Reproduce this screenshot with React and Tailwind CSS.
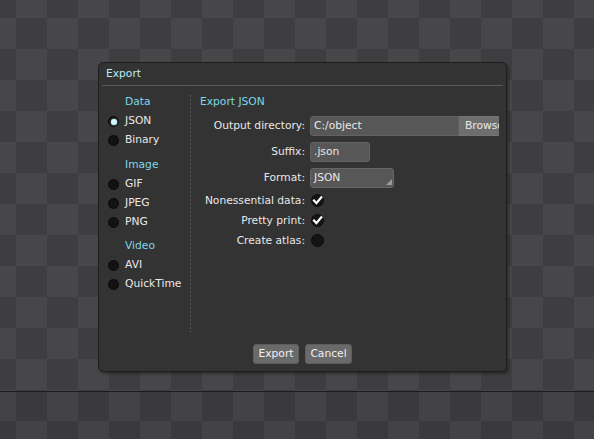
import React from "react";

function Radio({ checked }) {
  return (
    <span className="w-[11px] h-[11px] rounded-full bg-[#121212] border border-[#0a0a0a] flex items-center justify-center shrink-0">
      {checked && <span className="w-[6px] h-[6px] rounded-full bg-[#d2f7fc] shadow-[0_0_2px_#8fe3f3]" />}
    </span>
  );
}

function RadioRow({ label, checked }) {
  return (
    <div className="h-[19px] flex items-center pl-[9px] gap-[6px]">
      <Radio checked={checked} />
      <span className="text-[#e8e8e8]">{label}</span>
    </div>
  );
}

function Header({ children, className = "" }) {
  return (
    <div className={"h-[19.25px] flex items-center text-[#7fd6ea] " + className}>{children}</div>
  );
}

function Check({ checked }) {
  return (
    <span className="w-[13px] h-[13px] rounded-full bg-[#141414] border border-[#0c0c0c] flex items-center justify-center ml-[1px]">
      {checked && (
        <svg width="11" height="11" viewBox="0 0 11 11">
          <path d="M2 5.6 L4.4 8.2 L9.3 2.3" fill="none" stroke="#ffffff" strokeWidth="2.2" strokeLinecap="square" />
        </svg>
      )}
    </span>
  );
}

export default function App() {
  return (
    <div className="w-[594px] h-[439px] overflow-hidden bg-[conic-gradient(#47474a_25%,#3e3e41_0_50%,#47474a_0_75%,#3e3e41_0)] bg-[length:62px_62px] bg-[position:16px_18px] font-['DejaVu_Sans',sans-serif] text-[10.7px] leading-none">
      <div className="h-[391px] pl-[98px] pt-[62px]">
        <div className="w-[409px] h-[310px] bg-[#333333] border border-[#1e1e1e] rounded-[5px] shadow-[2px_2px_3px_rgba(0,0,0,0.35)] flex flex-col">
          <div className="h-[22px] flex items-center pl-[7px] pt-[1px] text-[#b4ecf6]">Export</div>
          <div className="mx-[3px] h-px bg-[#5a5a5a]" />
          <div className="h-[250px] flex">
            <div className="w-[91px] pt-[7px] flex flex-col">
              <Header className="pl-[26px]">Data</Header>
              <RadioRow label="JSON" checked />
              <RadioRow label="Binary" />
              <Header className="pl-[26px] mt-[5px]">Image</Header>
              <RadioRow label="GIF" />
              <RadioRow label="JPEG" />
              <RadioRow label="PNG" />
              <Header className="pl-[26px] mt-[5px]">Video</Header>
              <RadioRow label="AVI" />
              <RadioRow label="QuickTime" />
            </div>
            <div className="w-px mt-[9px] mb-[4px] bg-[repeating-linear-gradient(to_bottom,#5c5c5c_0_2px,transparent_2px_4px)]" />
            <div className="flex-1 pt-[7px] pl-[9px] pr-[7px] flex flex-col">
              <Header>Export JSON</Header>
              <div className="mt-[3.5px] grid grid-cols-[105px_189px] gap-x-[5px] text-[#e8e8e8]">
                <div className="h-[20px] pt-[2px] flex items-center justify-end">Output directory:</div>
                <div className="h-[20px] flex">
                  <div className="w-[149px] h-full bg-[#575757] border border-[#626262] rounded-l-[3px] flex items-center pl-[3px] pt-[2px]">C:/object</div>
                  <div className="w-[40px] h-full bg-[#6e6e6e] border-y border-[#747474] overflow-hidden whitespace-nowrap flex items-center pl-[6px] pt-[2px]">Browse</div>
                </div>
                <div className="h-[20px] pt-[2px] mt-[6px] flex items-center justify-end">Suffix:</div>
                <div className="h-[20px] mt-[6px] flex">
                  <div className="w-[60px] h-full bg-[#575757] border border-[#626262] rounded-[3px] flex items-center pl-[3px] pt-[2px]">.json</div>
                </div>
                <div className="h-[20px] pt-[2px] mt-[6px] flex items-center justify-end">Format:</div>
                <div className="h-[20px] mt-[6px] flex">
                  <div className="relative w-[84px] h-full bg-[#575757] border border-[#666666] rounded-[3px] flex items-center pl-[3px] pt-[2px]">
                    JSON
                    <svg className="absolute right-[1px] bottom-[2px]" width="6" height="6" viewBox="0 0 6 6">
                      <polygon points="6,0 6,6 0,6" fill="#9a9a9a" />
                    </svg>
                  </div>
                </div>
                <div className="h-[20px] pt-[2px] mt-[3px] flex items-center justify-end">Nonessential data:</div>
                <div className="h-[20px] mt-[3px] flex items-center"><Check checked /></div>
                <div className="h-[20px] pt-[2px] flex items-center justify-end">Pretty print:</div>
                <div className="h-[20px] flex items-center"><Check checked /></div>
                <div className="h-[20px] pt-[2px] flex items-center justify-end">Create atlas:</div>
                <div className="h-[20px] flex items-center"><Check /></div>
              </div>
            </div>
          </div>
          <div className="pt-[8px] flex justify-center gap-[6px] text-[#f0f0f0]">
            <div className="w-[46px] h-[20px] bg-[#6a6a6a] border border-[#5d5d5d] rounded-[3px] flex items-center justify-center pt-[1px]">Export</div>
            <div className="w-[47px] h-[20px] bg-[#6a6a6a] border border-[#5d5d5d] rounded-[3px] flex items-center justify-center pt-[1px]">Cancel</div>
          </div>
        </div>
      </div>
      <div className="h-[48px] border-t border-[#1c1c1e] bg-black/5" />
    </div>
  );
}
